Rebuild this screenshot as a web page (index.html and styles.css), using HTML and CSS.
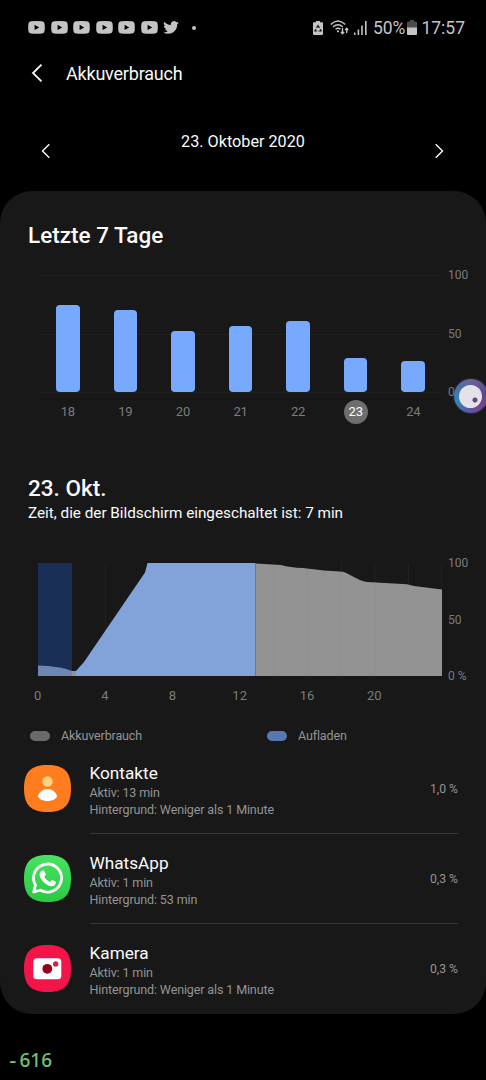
FILE: index.html
```html
<!DOCTYPE html>
<html lang="de">
<head>
  <meta charset="UTF-8">
  <meta name="viewport" content="width=device-width, initial-scale=1.0">
  <title>Akkuverbrauch</title>
  <link rel="stylesheet" href="styles.css">
</head>
<body>

  <svg class="defs" width="0" height="0">
    <symbol id="yt" viewBox="0 0 17 13">
      <path fill-rule="evenodd" d="M3 .3Q8.5-.1 14 .3Q16.3.5 16.6 2.8Q17 6.500 16.600 10Q16.300 12.200 14 12.500Q8.500 12.900 3 12.500Q.700 12.200.400 10Q0 6.500.400 2.800Q.700.500 3 .300ZM6.600 3.800V9L11.200 6.400Z"/>
    </symbol>
    <symbol id="squircle" viewBox="0 0 47 47">
      <path d="M23.500 0C40 0 47 7 47 23.500S40 47 23.500 47S0 40 0 23.500S7 0 23.500 0Z"/>
    </symbol>
  </svg>

  <div class="statusbar">
    <div class="notifications">
      <svg class="yt"><use href="#yt"/></svg>
      <svg class="yt"><use href="#yt"/></svg>
      <svg class="yt"><use href="#yt"/></svg>
      <svg class="yt"><use href="#yt"/></svg>
      <svg class="yt"><use href="#yt"/></svg>
      <svg class="yt"><use href="#yt"/></svg>
      <svg class="twitter" viewBox="0 2 24 20"><path d="M23.950 4.570a10 10 0 0 1-2.820.770 4.960 4.960 0 0 0 2.160-2.720c-.950.550-2 .960-3.130 1.190a4.920 4.920 0 0 0-8.380 4.480C7.690 8.100 4.070 6.130 1.640 3.160a4.920 4.920 0 0 0 1.520 6.570 4.900 4.900 0 0 1-2.230-.610v.060a4.920 4.920 0 0 0 3.950 4.830 5 5 0 0 1-2.210.080 4.940 4.940 0 0 0 4.600 3.420A9.870 9.870 0 0 1 0 19.540a14 14 0 0 0 7.550 2.210c9.050 0 14-7.500 14-13.980l-.020-.640a9.900 9.900 0 0 0 2.420-2.560z"/></svg>
      <span class="more"></span>
    </div>
    <div class="system">
      <svg class="saver" viewBox="0 0 10 14">
        <path d="M3 0h4v1.300h2q1 0 1 1V13q0 1-1 1H1q-1 0-1-1V2.300q0-1 1-1h2z"/>
        <path class="saver-mark" d="M3.500 7L5 4.600L6.500 7M7.300 8.300L8 10H5.800M4.200 10H2L2.800 8.300"/>
      </svg>
      <svg class="wifi" viewBox="0 0 19 15">
        <path d="M.700 4.500Q8 -2.300 15.300 4.500M3.100 7Q8 2.600 12.900 7M5.500 9.300Q8 7.200 10.500 9.300"/>
        <circle cx="8" cy="11.300" r="1.100"/>
        <path class="wifi-arrows" d="M12.500 8V13.500M10.900 12L12.500 13.700L14.100 12M16.700 13V8.300M15.200 10L16.700 8.300L18.200 10"/>
      </svg>
      <svg class="signal" viewBox="0 0 13 14"><path d="M0 11.500h1.500V14H0zM3.600 8.500h1.600V14H3.600zM7.200 4.500h1.600V14H7.200zM11 0h1.600v14H11z"/></svg>
      <span class="percent">50%</span>
      <svg class="battery" viewBox="0 0 10 15">
        <path class="battery-empty" d="M3 0h4v1.500h2q1 0 1 1V8H0V2.500q0-1 1-1h2z"/>
        <path d="M0 7.500h10V14q0 1-1 1H1q-1 0-1-1z"/>
      </svg>
      <span class="clock">17:57</span>
    </div>
  </div>

  <div class="header">
    <svg class="back" viewBox="0 0 12 18"><path d="M10.500 .700L2 9L10.500 17.300"/></svg>
    <h1>Akkuverbrauch</h1>
  </div>

  <div class="date-nav">
    <svg class="arrow" viewBox="0 0 10 16"><path d="M8.300 1.200L1.500 8L8.300 14.800"/></svg>
    <span class="date">23. Oktober 2020</span>
    <svg class="arrow" viewBox="0 0 10 16"><path d="M1.700 1.200L8.500 8L1.700 14.800"/></svg>
  </div>

  <div class="card">
    <h2>Letzte 7 Tage</h2>

    <div class="week">
      <div class="week-main">
        <div class="week-plot">
          <div class="bar" style="height: 87px"></div>
          <div class="bar" style="height: 82px"></div>
          <div class="bar" style="height: 61px"></div>
          <div class="bar" style="height: 66px"></div>
          <div class="bar" style="height: 71px"></div>
          <div class="bar" style="height: 34px"></div>
          <div class="bar" style="height: 31px"></div>
        </div>
        <div class="week-days">
          <span>18</span><span>19</span><span>20</span><span>21</span><span>22</span><span><b>23</b></span><span>24</span>
        </div>
      </div>
      <div class="axis week-axis"><span>100</span><span>50</span><span>0 %</span></div>
      <div class="orb"><div class="orb-face"></div></div>
    </div>

    <h2 class="day-title">23. Okt.</h2>
    <p class="screen-time">Zeit, die der Bildschirm eingeschaltet ist: 7 min</p>

    <div class="day">
      <svg class="day-plot" viewBox="0 0 404 113">
        <path class="grid" d="M67.500 0V113M303.500 0V113M337 0V113M370.500 0V113M403.500 0V113"/>
        <rect class="selected" width="34" height="113"/>
        <path class="low" d="M0 102.500Q22 103 34 108V113H0Z"/>
        <path class="used" d="M34 108H40V113H34Z"/>
        <path class="charge" d="M38 113V108L46 99L107 9.500L109.500 0H217.500V113Z"/>
        <path class="used" d="M217.500 0.500L243 2Q252 4.500 265 5L286 7.500L305 8.700C312 11 319 17 329 19L369 21.200L376 23L404 26.500V113H217.500Z"/>
        <path class="grid-over" d="M236 2V113M269.500 6V113M303 9V113M337 20V113M370 22V113"/>
      </svg>
      <div class="axis day-axis"><span>100</span><span>50</span><span>0 %</span></div>
    </div>
    <div class="hours"><span>0</span><span>4</span><span>8</span><span>12</span><span>16</span><span>20</span></div>

    <div class="legend">
      <div class="legend-item"><i class="pill pill-used"></i>Akkuverbrauch</div>
      <div class="legend-item"><i class="pill pill-charge"></i>Aufladen</div>
    </div>

    <div class="apps">
      <div class="app">
        <svg class="app-icon" viewBox="0 0 47 47">
          <use href="#squircle" fill="#ff7d1f"/>
          <circle cx="23.500" cy="16.500" r="5.200" fill="#ffd37c"/>
          <path fill="#fff" d="M14 31.500C16 21.500 31 21.500 33 31.500C30 37.500 17 37.500 14 31.500Z"/>
        </svg>
        <div class="app-body">
          <div class="app-text">
            <h3>Kontakte</h3>
            <p>Aktiv: 13 min</p>
            <p>Hintergrund: Weniger als 1 Minute</p>
          </div>
          <span class="app-value">1,0 %</span>
        </div>
      </div>
      <div class="app">
        <svg class="app-icon" viewBox="0 0 47 47">
          <linearGradient id="wa" x1="0" y1="0" x2="0" y2="1"><stop offset="0" stop-color="#4ae263"/><stop offset="1" stop-color="#29c944"/></linearGradient>
          <use href="#squircle" fill="url(#wa)"/>
          <path fill="none" stroke="#fff" stroke-width="2.800" stroke-linejoin="round" d="M9.600 37L11.500 30.200A14 14 0 1 1 16.600 35.200Z"/>
          <path fill="#fff" d="M18 15.500C19.300 15.200 20.200 15.500 20.600 16.600L21.700 19.300C22 20.200 20.500 21 20.200 21.800C21.500 24.200 23.300 25.900 26 26.900C26.800 26.400 27.500 24.900 28.400 25.100L31.500 26.600C32.500 27.200 31.500 29.700 30.400 30.400C27 32.500 22.300 29.600 20 27.400C17.500 25 15.200 21.600 15.700 18.600C15.900 17.400 16.900 15.800 18 15.500Z"/>
        </svg>
        <div class="app-body">
          <div class="app-text">
            <h3>WhatsApp</h3>
            <p>Aktiv: 1 min</p>
            <p>Hintergrund: 53 min</p>
          </div>
          <span class="app-value">0,3 %</span>
        </div>
      </div>
      <div class="app">
        <svg class="app-icon" viewBox="0 0 47 47">
          <use href="#squircle" fill="#f31549"/>
          <rect x="9.300" y="13.300" width="28" height="21" rx="3.500" fill="#fff"/>
          <circle cx="23.300" cy="23.800" r="4.900" fill="#980022"/>
          <circle cx="31.700" cy="19" r="2.700" fill="#d3224d"/>
        </svg>
        <div class="app-body">
          <div class="app-text">
            <h3>Kamera</h3>
            <p>Aktiv: 1 min</p>
            <p>Hintergrund: Weniger als 1 Minute</p>
          </div>
          <span class="app-value">0,3 %</span>
        </div>
      </div>
    </div>
  </div>

  <div class="counter"><span class="minus">-</span>616</div>

</body>
</html>
```
FILE: styles.css
```css
* {
  box-sizing: border-box;
}

body {
  margin: 0;
  height: 1080px;
  overflow: hidden;
  background: #000;
  color: #fafafa;
  font-family: Roboto, sans-serif;
}

h1, h2, h3, p {
  margin: 0;
}

svg {
  display: block;
  flex: none;
}

.defs {
  position: absolute;
}

/* status bar */
.statusbar {
  height: 55px;
  padding: 0 21px 0 28px;
  display: flex;
  align-items: center;
  justify-content: space-between;
  color: #c4c4c4;
  fill: #c4c4c4;
}

.notifications, .system {
  display: flex;
  align-items: center;
}

.yt {
  width: 17px;
  height: 13px;
  margin-right: 5.500px;
}

.twitter {
  width: 16px;
  height: 13px;
}

.more {
  width: 4px;
  height: 4px;
  margin-left: 12.500px;
  border-radius: 50%;
  background: #c4c4c4;
}

.saver {
  width: 10px;
  height: 14px;
  margin-right: 7px;
}

.saver-mark {
  fill: none;
  stroke: #111;
  stroke-width: 1.200;
}

.wifi {
  width: 19px;
  height: 15px;
  margin-right: 5px;
}

.wifi path {
  fill: none;
  stroke: #c4c4c4;
  stroke-width: 1.400;
}

.signal {
  width: 13px;
  height: 14px;
  margin-right: 6px;
}

.percent, .clock {
  font-size: 17.500px;
  line-height: 20px;
}

.battery {
  width: 10px;
  height: 15px;
  margin: 0 4px 0 2px;
}

.battery-empty {
  fill: #4b4b4b;
}

/* title and date */
.header {
  height: 36px;
  padding-left: 31px;
  display: flex;
  align-items: center;
}

.back {
  width: 12px;
  height: 18px;
  margin-right: 23px;
}

.back path, .arrow path {
  fill: none;
  stroke: #fafafa;
  stroke-width: 1.800;
}

.arrow path {
  stroke-width: 1.400;
}

h1 {
  font-size: 18px;
  font-weight: 400;
  letter-spacing: -0.200px;
}

.date-nav {
  height: 100px;
  padding: 0 42px 0 41px;
  display: flex;
  justify-content: space-between;
}

.arrow {
  width: 10px;
  height: 16px;
  margin-top: 52px;
}

.date {
  margin-top: 41px;
  padding-left: 1px;
  font-size: 16.200px;
  line-height: 20px;
}

/* card */
.card {
  height: 823px;
  padding-top: 30px;
  border-radius: 32px;
  background: #181818;
}

h2 {
  padding-left: 28px;
  font-size: 22.500px;
  line-height: 28px;
  font-weight: 500;
}

.axis {
  margin-left: 6px;
  display: flex;
  flex-direction: column;
  justify-content: space-between;
  font-size: 12px;
  line-height: 14px;
  color: #7b7b7b;
}

.week {
  position: relative;
  margin-top: 26px;
  padding-left: 39px;
  display: flex;
  align-items: flex-start;
}

.week-main {
  width: 403px;
}

.week-plot {
  height: 118px;
  display: flex;
  align-items: flex-end;
  justify-content: space-around;
  border-top: 1px solid #202020;
  border-bottom: 1px solid #202020;
  background: linear-gradient(#202020, #202020) 0 58px / 100% 1px no-repeat;
}

.bar {
  width: 23.500px;
  border-radius: 4px;
  background: #77aaff;
}

.week-days {
  margin-top: 7px;
  display: flex;
  font-size: 13px;
  letter-spacing: -0.200px;
  color: #7b7b7b;
}

.week-days span {
  flex: 1;
  display: flex;
  justify-content: center;
  line-height: 24px;
}

.week-days b {
  width: 24px;
  height: 24px;
  border-radius: 50%;
  background: #6e6e6e;
  color: #fff;
  text-align: center;
  font-weight: 400;
}

.week-axis {
  height: 131px;
  margin-top: -7px;
}

/* floating assistant button */
.orb {
  position: absolute;
  left: 453.500px;
  top: 104px;
  width: 34px;
  height: 34px;
  padding: 5.500px;
  border-radius: 50%;
  background: conic-gradient(#6b6098, #5a4a8c 80deg, #76448e 140deg, #5b58a8 190deg, #2f86bd 250deg, #4c6fa8 310deg, #6b6098);
  box-shadow: 0 0 2px #555;
}

.orb-face {
  height: 23px;
  width: 23px;
  border-radius: 50%;
  background: radial-gradient(circle at 16px 15px, #5f4780 2px, transparent 3px), #e4e2e8;
}

.day-title {
  margin-top: 50px;
}

.screen-time {
  padding-left: 28px;
  margin-top: 1px;
  font-size: 15.300px;
  line-height: 20px;
  letter-spacing: -0.020px;
}

.day {
  margin-top: 40px;
  padding-left: 38px;
  display: flex;
}

.day-plot {
  width: 404px;
  height: 113px;
}

.grid {
  stroke: #202020;
}

.grid-over {
  stroke: #8f8f8f;
}

.selected {
  fill: #192f56;
}

.low {
  fill: #6d86b3;
}

.charge {
  fill: #82a3d9;
}

.used {
  fill: #939393;
}

.day-axis {
  height: 127px;
  margin: -7px 0 -7px 6px;
}

.hours {
  width: 404px;
  margin: 10px 0 0 4px;
  display: flex;
  font-size: 13px;
  line-height: 20px;
  color: #7b7b7b;
}

.hours span {
  flex: 1;
  text-align: center;
}

.legend {
  margin-top: 20px;
  padding-left: 30px;
  display: flex;
  font-size: 12.500px;
  line-height: 20px;
  letter-spacing: -0.130px;
  color: #949494;
}

.legend-item {
  flex: none;
  width: 237px;
  display: flex;
  align-items: center;
}

.legend-item:last-child {
  width: auto;
}

.pill {
  width: 20px;
  height: 10px;
  margin-right: 11px;
  border-radius: 5px;
}

.pill-used {
  background: #6b6b6b;
}

.pill-charge {
  background: #5878b4;
}

/* app list */
.apps {
  padding: 0 28px 0 24px;
}

.app {
  height: 90px;
  display: flex;
}

.app-icon {
  width: 47px;
  height: 47px;
  margin: 19px 18.500px 0 0;
}

.app-body {
  flex: 1;
  height: 88px;
  padding-top: 16px;
  display: flex;
  justify-content: space-between;
  border-bottom: 1px solid #393939;
}

.app:last-child .app-body {
  border-bottom: 0;
}

h3 {
  margin-bottom: 1px;
  font-size: 17.200px;
  line-height: 22px;
  font-weight: 400;
}

.app p {
  font-size: 12.500px;
  line-height: 16.500px;
  letter-spacing: -0.120px;
  color: #949494;
}

.app-value {
  padding-top: 19px;
  font-size: 12.200px;
  line-height: 16px;
  color: #949494;
}

.counter {
  padding: 36px 0 0 9.500px;
  font-family: "Noto Sans", sans-serif;
  font-size: 19px;
  line-height: 20px;
  font-weight: 500;
  color: #6fc276;
}

.minus {
  display: inline-block;
  width: 10px;
  transform: scaleX(1.150);
}
```
